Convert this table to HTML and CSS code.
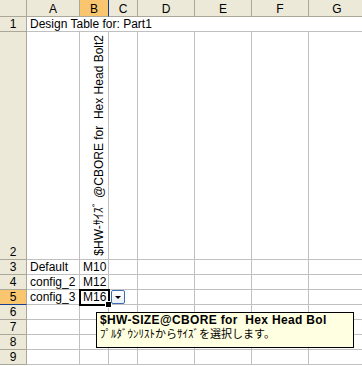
FILE: index.html
```html
<!DOCTYPE html>
<html>
<head>
<meta charset="utf-8">
<link rel="stylesheet" href="styles.css">
</head>
<body>
<div class="sheet">
  <div class="grid">
    <div class="hd corner"></div>
    <div class="hd col">A</div>
    <div class="hd col sel-col">B</div>
    <div class="hd col">C</div>
    <div class="hd col">D</div>
    <div class="hd col">E</div>
    <div class="hd col">F</div>
    <div class="hd col">G</div>

    <div class="hd row">1</div>
    <div class="c txt span-all">Design Table for: Part1</div>

    <div class="hd row tall">2</div>
    <div class="c"></div>
    <div class="c vcell"><span class="vtext">$HW-ｻｲｽﾞ @CBORE for&nbsp; Hex Head Bolt2</span></div>
    <div class="c"></div><div class="c"></div><div class="c"></div><div class="c"></div><div class="c"></div>

    <div class="hd row">3</div>
    <div class="c txt">Default</div><div class="c txt">M10</div>
    <div class="c"></div><div class="c"></div><div class="c"></div><div class="c"></div><div class="c"></div>

    <div class="hd row">4</div>
    <div class="c txt">config_2</div><div class="c txt">M12</div>
    <div class="c"></div><div class="c"></div><div class="c"></div><div class="c"></div><div class="c"></div>

    <div class="hd row sel-row">5</div>
    <div class="c txt">config_3</div><div class="c txt">M16</div>
    <div class="c"></div><div class="c"></div><div class="c"></div><div class="c"></div><div class="c"></div>

    <div class="hd row">6</div>
    <div class="c"></div><div class="c"></div><div class="c"></div><div class="c"></div><div class="c"></div><div class="c"></div><div class="c"></div>
    <div class="hd row">7</div>
    <div class="c"></div><div class="c"></div><div class="c"></div><div class="c"></div><div class="c"></div><div class="c"></div><div class="c"></div>
    <div class="hd row">8</div>
    <div class="c"></div><div class="c"></div><div class="c"></div><div class="c"></div><div class="c"></div><div class="c"></div><div class="c"></div>
    <div class="hd row">9</div>
    <div class="c"></div><div class="c"></div><div class="c"></div><div class="c"></div><div class="c"></div><div class="c"></div><div class="c"></div>
  </div>

  <div class="active-cell"><span class="fill-handle"></span></div>
  <div class="dropdown-btn"><span class="arrow"></span></div>
  <div class="input-msg">
    <div class="msg-title">$HW-SIZE@CBORE for&nbsp; Hex Head Bol</div>
    <div class="msg-body">ﾌﾟﾙﾀﾞｳﾝﾘｽﾄからｻｲｽﾞを選択します。</div>
  </div>
</div>
</body>
</html>
```

FILE: styles.css
```css
html, body {
  margin: 0;
  padding: 0;
  background: #ffffff;
  overflow: hidden;
}

.sheet {
  position: relative;
  width: 362px;
  height: 366px;
  overflow: hidden;
  font-family: "Liberation Sans", Arial, "Noto Sans CJK JP", sans-serif;
  font-size: 12px;
  color: #000;
}

.grid {
  display: grid;
  grid-template-columns: 27px 53px 29px 29px 57px 57px 57px 57px;
  grid-template-rows: 17px 15px 228px 15px 15px 15px 15px 15px 15px 15px;
  width: 366px;
}

.grid > div {
  box-sizing: border-box;
  overflow: hidden;
  white-space: nowrap;
}

.hd {
  background: #ece9d8;
  border-right: 1px solid #aca899;
  border-bottom: 1px solid #aca899;
  text-align: center;
}

.col {
  padding-top: 3px;
  line-height: 13px;
}

.corner {
  border-right: 1px solid #aca899;
}

.row {
  line-height: 14px;
}

.tall {
  display: flex;
  align-items: flex-end;
  justify-content: center;
}

.sel-col {
  background: #f9c66f;
  border-right-color: #1a3c8c;
}

.sel-row {
  background: #f9c66f;
  border-bottom-color: #1a3c8c;
}

.c {
  border-right: 1px solid #c0c0c0;
  border-bottom: 1px solid #c0c0c0;
  background: #fff;
}

.txt {
  padding-left: 3px;
  line-height: 14px;
}

.span-all {
  grid-column: 2 / 9;
  padding-left: 3px;
}

.vcell {
  display: flex;
  align-items: flex-end;
  padding-bottom: 3px;
}

.vtext {
  margin-left: 12px;
  writing-mode: vertical-rl;
  transform: rotate(180deg);
  line-height: 14px;
  white-space: nowrap;
}

.active-cell {
  position: absolute;
  left: 79px;
  top: 289px;
  width: 31px;
  height: 17px;
  box-sizing: border-box;
  border: 2px solid #000;
}

.fill-handle {
  position: absolute;
  right: -4px;
  bottom: -4px;
  width: 5px;
  height: 5px;
  background: #000;
  border: 1px solid #fff;
}

.dropdown-btn {
  position: absolute;
  left: 111px;
  top: 290px;
  width: 14px;
  height: 14px;
  box-sizing: border-box;
  border: 1px solid #3c6db4;
  border-radius: 2px;
  background: linear-gradient(#ffffff, #e9eef8);
  display: flex;
  align-items: center;
  justify-content: center;
}

.arrow {
  width: 0;
  height: 0;
  border-left: 3px solid transparent;
  border-right: 3px solid transparent;
  border-top: 3px solid #000;
  margin-top: 1px;
}

.input-msg {
  position: absolute;
  left: 96px;
  top: 312px;
  width: 258px;
  height: 36px;
  box-sizing: border-box;
  border: 1px solid #000;
  background: #ffffe1;
  padding: 1px 0 0 3px;
}

.msg-title {
  font-weight: bold;
  font-size: 12px;
  line-height: 13px;
  letter-spacing: 0.35px;
  white-space: nowrap;
}

.msg-body {
  font-family: "Noto Sans CJK JP", sans-serif;
  font-size: 11px;
  line-height: 12px;
  white-space: nowrap;
}
```
